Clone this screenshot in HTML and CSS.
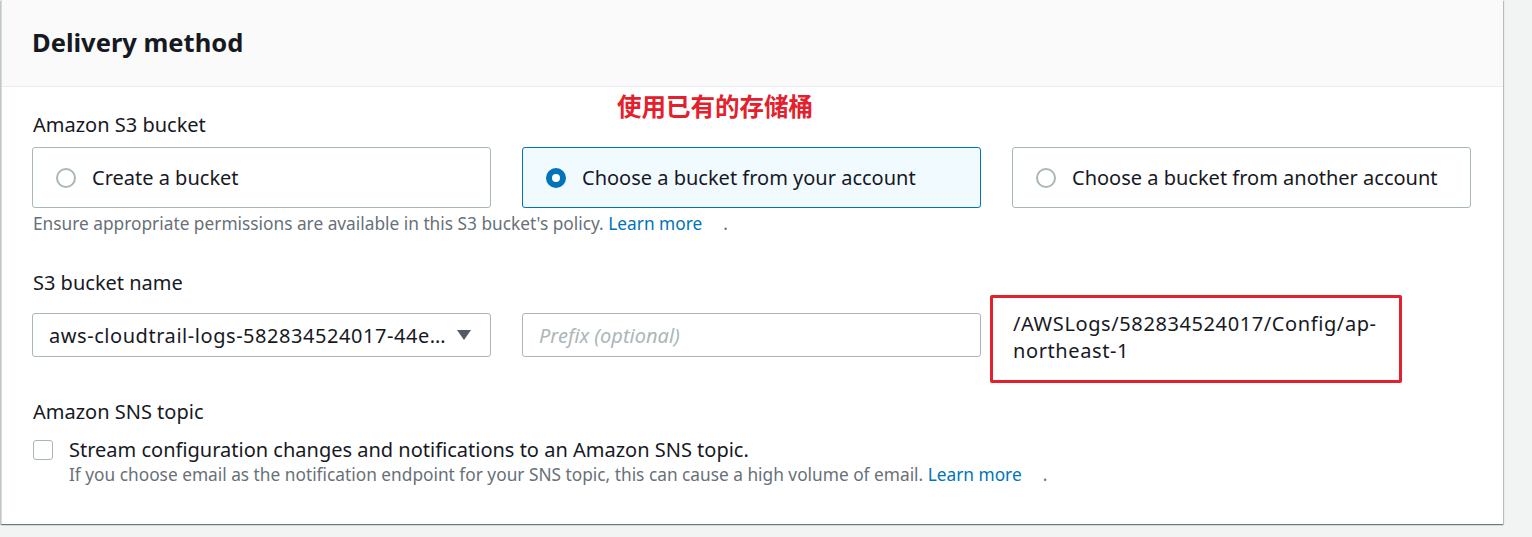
FILE: index.html
```html
<!DOCTYPE html>
<html>
<head>
<meta charset="utf-8">
<link rel="stylesheet" href="styles.css">
</head>
<body>
<div class="page">
  <section class="panel">
    <header class="panel-header">
      <h2 class="title">Delivery method</h2>
    </header>
    <div class="panel-body">
      <div class="field-label">Amazon S3 bucket</div>
      <div class="tiles">
        <div class="tile">
          <span class="radio"></span>
          <span class="tile-text">Create a bucket</span>
        </div>
        <div class="tile tile-selected">
          <span class="radio radio-on"></span>
          <span class="tile-text">Choose a bucket from your account</span>
        </div>
        <div class="tile">
          <span class="radio"></span>
          <span class="tile-text">Choose a bucket from another account</span>
        </div>
      </div>
      <div class="help">Ensure appropriate permissions are available in this S3 bucket's policy. <a class="link">Learn more</a><span class="ext"></span>.</div>

      <div class="field-label label-name">S3 bucket name</div>
      <div class="bucket-row">
        <div class="select">
          <span class="select-text">aws-cloudtrail-logs-582834524017-44e…</span>
          <svg class="caret" width="16" height="12" viewBox="0 0 16 12"><path d="M1 1 H15 L8 11 Z" fill="#545b64"/></svg>
        </div>
        <div class="input"><span class="placeholder">Prefix (optional)</span></div>
        <div class="path-text">/AWSLogs/582834524017/Config/ap-northeast-1</div>
      </div>

      <div class="field-label label-sns">Amazon SNS topic</div>
      <div class="check-row">
        <span class="checkbox"></span>
        <div class="check-content">
          <div class="check-text">Stream configuration changes and notifications to an Amazon SNS topic.</div>
          <div class="help help-check">If you choose email as the notification endpoint for your SNS topic, this can cause a high volume of email. <a class="link">Learn more</a><span class="ext"></span>.</div>
        </div>
      </div>
    </div>
  </section>
  <div class="note">使用已有的存储桶</div>
  <div class="highlight"></div>
</div>
</body>
</html>
```

FILE: styles.css
```css
* { box-sizing: border-box; }
html, body {
  margin: 0;
  padding: 0;
  background: #f2f3f3;
}
body {
  font-family: "Noto Sans", "Open Sans", "Noto Sans CJK SC", sans-serif;
  color: #16191f;
  width: 1532px;
  height: 537px;
  overflow: hidden;
}
.page {
  position: relative;
  width: 1532px;
  height: 537px;
}
.panel {
  margin-left: 1px;
  width: 1502px;
  height: 524px;
  background: #fff;
  border-left: 1px solid #d5dbdb;
  box-shadow: 0 1px 1px 0 rgba(0,28,36,.35), 1px 1px 1px 0 rgba(0,28,36,.2), -1px 1px 1px 0 rgba(0,28,36,.15);
}
.panel-header {
  height: 87px;
  background: #fafafa;
  border-bottom: 1px solid #eaeded;
  display: flex;
  align-items: center;
  padding-left: 30px;
}
.title {
  margin: 0;
  font-size: 25.5px;
  font-weight: 700;
  line-height: 30px;
  padding-bottom: 3px;
}
.panel-body {
  padding: 26px 31px 0 30px;
}
.field-label {
  font-size: 20px;
  line-height: 24px;
  padding-left: 1px;
}
.tiles {
  margin-top: 10px;
  display: grid;
  grid-template-columns: 459px 459px 459px;
  column-gap: 31px;
}
.tile {
  height: 61px;
  border: 1px solid #aab7b8;
  border-radius: 3px;
  display: flex;
  align-items: center;
  padding-left: 23px;
}
.tile-selected {
  background: #f1faff;
  border-color: #0073bb;
}
.radio {
  width: 20px;
  height: 20px;
  border-radius: 50%;
  border: 2px solid #aab7b8;
  flex: none;
}
.radio-on {
  border: 6px solid #0073bb;
  background: #fff;
}
.tile-text {
  margin-left: 16px;
  font-size: 20px;
  line-height: 24px;
}
.help {
  margin-top: 5px;
  font-size: 17.3px;
  line-height: 22px;
  color: #687078;
  padding-left: 1px;
}
.link {
  color: #0073bb;
  text-decoration: none;
}
.ext {
  display: inline-block;
  width: 21px;
}
.label-name {
  margin-top: 36px;
}
.bucket-row {
  margin-top: 18px;
  display: grid;
  grid-template-columns: 459px 459px 459px;
  column-gap: 31px;
  align-items: start;
}
.select {
  height: 44px;
  border: 1px solid #aab7b8;
  border-radius: 3px;
  display: flex;
  align-items: center;
  padding: 0 18px 0 16px;
  gap: 6px;
}
.select-text {
  flex: 1;
  min-width: 0;
  white-space: nowrap;
  font-size: 20px;
  letter-spacing: 0.55px;
}
.caret { flex: none; }
.input {
  height: 44px;
  border: 1px solid #aab7b8;
  border-radius: 3px;
  display: flex;
  align-items: center;
  padding-left: 16px;
}
.placeholder {
  font-size: 20px;
  font-style: italic;
  color: #aab7b8;
}
.path-text {
  margin-top: -3px;
  padding-left: 1px;
  width: 390px;
  font-size: 20px;
  line-height: 27px;
  letter-spacing: 0.6px;
}
.label-sns {
  margin-top: 36px;
}
.check-row {
  margin-top: 14px;
  display: flex;
  align-items: flex-start;
  padding-left: 1px;
}
.checkbox {
  width: 20px;
  height: 20px;
  border: 1px solid #aab7b8;
  border-radius: 3px;
  margin-top: 2px;
  flex: none;
}
.check-content {
  margin-left: 16px;
}
.check-text {
  font-size: 20px;
  line-height: 24px;
}
.help-check {
  margin-top: 2px;
  padding-left: 0;
}
.note {
  position: absolute;
  left: 617px;
  top: 92px;
  font-family: "Noto Sans CJK SC", sans-serif;
  font-weight: 700;
  font-size: 24.5px;
  line-height: 28px;
  color: #e3202b;
}
.highlight {
  position: absolute;
  left: 990px;
  top: 295px;
  width: 412px;
  height: 88px;
  border: 3px solid #e3202b;
  border-radius: 2px;
}
```
